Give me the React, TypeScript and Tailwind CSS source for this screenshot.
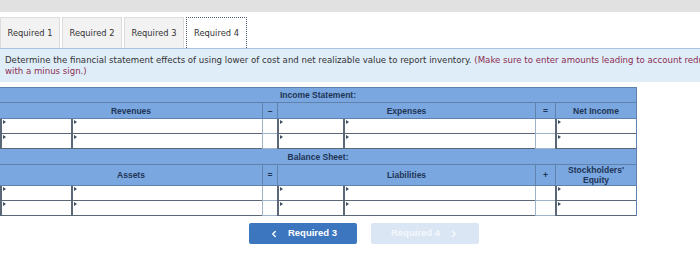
import { ChevronLeft, ChevronRight } from "lucide-react";

const cols = "grid grid-cols-[71px_191px_15px_66px_192px_20px_81px]";

const InputCell = ({ marker = true }: { marker?: boolean }) => (
  <div className="relative h-[15px] bg-white border-l-2 border-b border-[#5a6777]">
    {marker && (
      <span className="absolute left-[1px] top-[1px] w-0 h-0 border-y-[2px] border-y-transparent border-l-[3px] border-l-[#3d4c5e]" />
    )}
  </div>
);

const OpCell = () => <div className="h-[15px] bg-white border-l border-b border-[#9fb3c9]" />;

const InputRow = () => (
  <>
    <InputCell />
    <InputCell />
    <OpCell />
    <InputCell />
    <InputCell />
    <OpCell />
    <InputCell />
  </>
);

const HeadCell = ({ children, span = "" }: { children?: React.ReactNode; span?: string }) => (
  <div
    className={`${span} flex items-center justify-center text-center leading-[10px] text-[8.5px] font-bold text-[#1e3556] border-l border-b border-[#5f82ad]`}
  >
    {children}
  </div>
);

export default function App() {
  return (
    <div className="w-[700px] h-[267px] bg-white overflow-hidden font-['DejaVu_Sans',sans-serif]">
      <div className="h-[12px] bg-[#e1e1e1]" />
      <div className="h-[5px]" />

      {/* tabs */}
      <div className="flex gap-[2px] h-[31px]">
        {["Required 1", "Required 2", "Required 3"].map((t) => (
          <div
            key={t}
            className="w-[60px] flex items-center justify-center bg-[#f2f2f2] border border-b-0 border-[#dcdcdc] text-[8.3px] text-[#333]"
          >
            {t}
          </div>
        ))}
        <div className="w-[61px] flex items-center justify-center bg-white border border-dotted border-b-0 border-[#4a5a70] text-[8.3px] text-[#333]">
          Required 4
        </div>
      </div>

      {/* instructions */}
      <div className="h-[34px] bg-[#dfedf9] border-t border-[#a8c6e2] px-[5px] pt-[6px] text-[8.6px] leading-[11px] text-[#333] whitespace-nowrap">
        Determine the financial statement effects of using lower of cost and net realizable value to report inventory.{" "}
        <span className="text-[#8b2d52]">(Make sure to enter amounts leading to account reductions</span>
        <br />
        <span className="text-[#8b2d52]">with a minus sign.)</span>
      </div>

      <div className="h-[5px]" />

      {/* table */}
      <div className="w-[637px] bg-[#7aa7df] border-t border-r border-[#5f82ad] font-['Liberation_Sans',sans-serif]">
        <div className={cols}>
          <HeadCell span="col-span-7 h-[15px] border-l-0">Income Statement:</HeadCell>
          <HeadCell span="col-span-2 h-[16px] border-l-0">Revenues</HeadCell>
          <HeadCell span="h-[16px]">–</HeadCell>
          <HeadCell span="col-span-2 h-[16px]">Expenses</HeadCell>
          <HeadCell span="h-[16px]">=</HeadCell>
          <HeadCell span="h-[16px]">Net Income</HeadCell>
          <InputRow />
          <InputRow />
          <HeadCell span="col-span-7 h-[16px] border-l-0">Balance Sheet:</HeadCell>
          <HeadCell span="col-span-2 h-[21px] border-l-0">Assets</HeadCell>
          <HeadCell span="h-[21px]">=</HeadCell>
          <HeadCell span="col-span-2 h-[21px]">Liabilities</HeadCell>
          <HeadCell span="h-[21px]">+</HeadCell>
          <HeadCell span="h-[21px]">
            Stockholders'
            <br />
            Equity
          </HeadCell>
          <InputRow />
          <InputRow />
        </div>
      </div>

      {/* nav buttons */}
      <div className="flex gap-[14px] pl-[249px] pt-[7px] font-['Liberation_Sans',sans-serif]">
        <div className="w-[108px] h-[21px] flex items-center justify-center gap-[9px] bg-[#3b76bf] rounded-[2px] text-white text-[9.5px] font-bold">
          <ChevronLeft size={10} strokeWidth={3.5} />
          Required 3
        </div>
        <div className="w-[108px] h-[21px] flex items-center justify-center gap-[9px] bg-[#dbe6f4] rounded-[2px] text-[#f4f8fd] text-[9.5px] font-bold">
          Required 4
          <ChevronRight size={10} strokeWidth={3.5} />
        </div>
      </div>
    </div>
  );
}
